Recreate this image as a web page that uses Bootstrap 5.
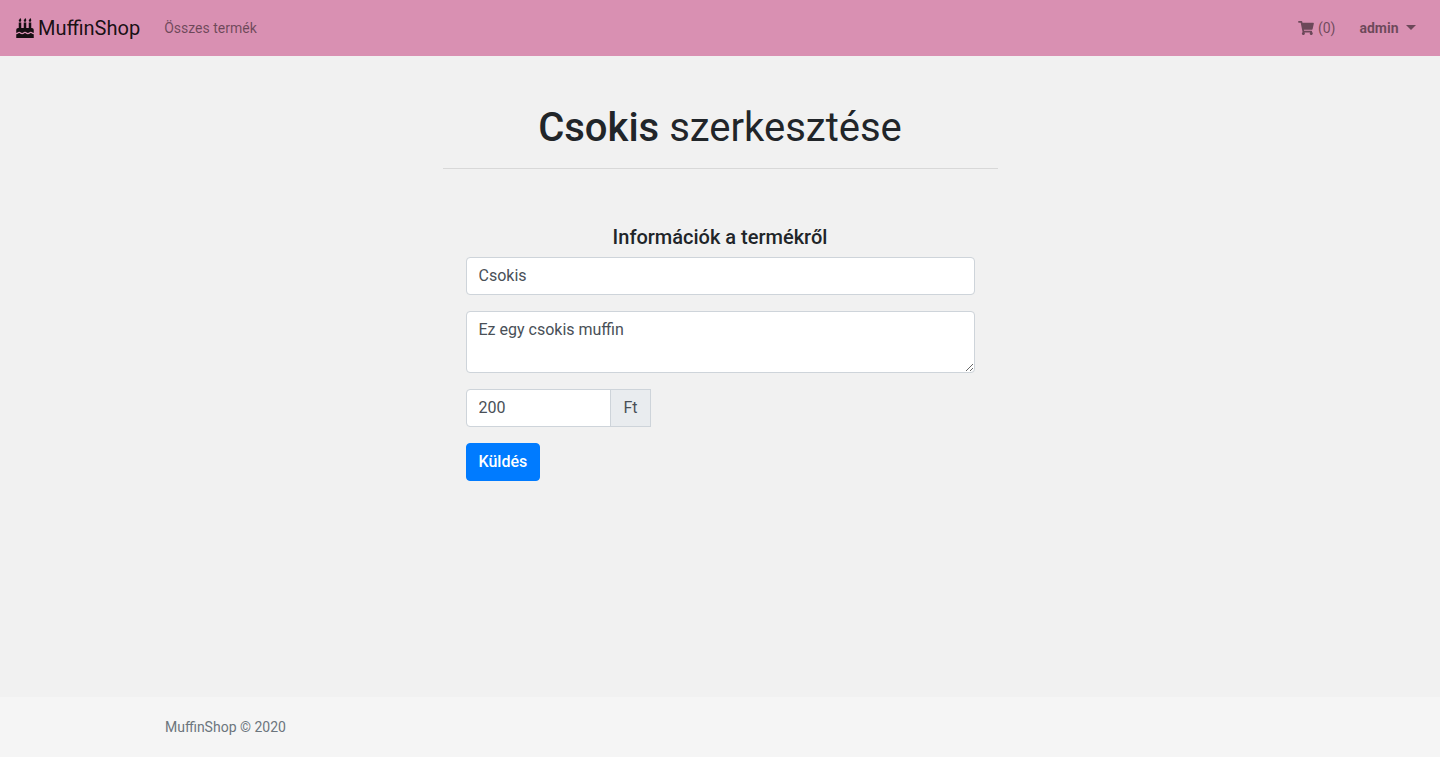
<!DOCTYPE html>
<html lang="hu">
<head>
<meta charset="utf-8">
<meta name="viewport" content="width=device-width, initial-scale=1">
<title>MuffinShop</title>
<link rel="stylesheet" href="https://cdn.jsdelivr.net/npm/bootstrap@5.3.0/dist/css/bootstrap.min.css">
<style>
  body { font-family: Roboto, "Liberation Sans", sans-serif; background: #f1f1f1; color: #212529; }
  .shop-nav { background: #d990b2; min-height: 56px; }
  .shop-nav .navbar-brand { color: rgba(0,0,0,.9); font-size: 20px; line-height: 30px; }
  .shop-nav .nav-link { color: rgba(0,0,0,.5); font-size: 14px; line-height: 24px; font-weight: 400; }
  .shop-nav .nav-link.user-link { font-weight: 700; }
  .user-link.dropdown-toggle::after { margin-left: 4px; border-width: 5px 5px 0; vertical-align: 3px; }
  .cake-icon { width: 18px; height: 20px; }
  .cart-icon { width: 16px; height: 14px; }
  .page-wrap { max-width: 1140px; padding-left: 15px; padding-right: 15px; }
  .page-title { font-size: 40px; line-height: 48px; font-weight: 400; }
  .page-title strong { font-weight: 500; }
  .title-rule { border-color: #000; opacity: .1; }
  .product-form { padding-left: 23px; padding-right: 23px; }
  .product-form h2 { font-size: 20px; line-height: 24px; font-weight: 500; }
  .product-form .form-control { color: #495057; border-color: #ced4da; border-radius: 4px; }
  .product-form textarea.form-control { height: 62px; min-height: 62px; }
  .price-group { max-width: 185px; }
  .product-form .price-group .form-control { border-radius: 4px 0 0 4px; }
  .product-form .price-group .input-group-text { margin-left: 0; color: #495057; background: #e9ecef; border-color: #ced4da; border-radius: 0; }
  .send-btn { --bs-btn-bg: #007bff; --bs-btn-border-color: #007bff; --bs-btn-border-radius: 4px; font-weight: 500; }
  .shop-footer { background: #f5f5f5; font-size: 14px; line-height: 60px; color: #6c757d; }
</style>
</head>
<body class="d-flex flex-column min-vh-100">
<nav class="navbar navbar-expand shop-nav px-3 py-2">
  <a class="navbar-brand d-flex align-items-center gap-1 p-0 me-3" href="#">
    <svg class="cake-icon" viewBox="0 0 448 512" fill="currentColor" aria-hidden="true"><path d="M448 384c-28.02 0-31.26-32-74.5-32-43.43 0-46.825 32-74.75 32-27.695 0-31.454-32-74.75-32-42.842 0-47.218 32-74.5 32-28.148 0-31.202-32-74.75-32-43.547 0-46.653 32-74.75 32v-80c0-26.5 21.5-48 48-48h16V112h64v144h64V112h64v144h64V112h64v144h16c26.5 0 48 21.5 48 48v80zm0 128H0v-96c43.356 0 46.767-32 74.75-32 27.951 0 31.253 32 74.75 32 42.843 0 47.217-32 74.5-32 28.148 0 31.201 32 74.75 32 43.357 0 46.767-32 74.75-32 27.488 0 31.252 32 74.5 32v96zM96 96c-17.75 0-32-14.25-32-32 0-31 32-23 32-64 12 0 32 29.5 32 56s-14.25 40-32 40zm128 0c-17.75 0-32-14.25-32-32 0-31 32-23 32-64 12 0 32 29.5 32 56s-14.25 40-32 40zm128 0c-17.75 0-32-14.25-32-32 0-31 32-23 32-64 12 0 32 29.5 32 56s-14.25 40-32 40z"/></svg>
    <span>MuffinShop</span>
  </a>
  <ul class="navbar-nav flex-grow-1 gap-2">
    <li class="nav-item me-auto"><a class="nav-link px-2" href="#">Összes termék</a></li>
    <li class="nav-item"><a class="nav-link px-2 d-flex align-items-center gap-1" href="#">
      <svg class="cart-icon" viewBox="0 0 576 512" fill="currentColor" aria-hidden="true"><path d="M528.12 301.319l47.273-208C578.806 78.301 567.391 64 551.99 64H159.208l-9.166-44.81C147.758 8.021 137.93 0 126.529 0H24C10.745 0 0 10.745 0 24v16c0 13.255 10.745 24 24 24h69.883l70.248 343.435C147.325 417.1 136 435.222 136 456c0 30.928 25.072 56 56 56s56-25.072 56-56c0-15.674-6.447-29.835-16.824-40h209.647C430.447 426.165 424 440.326 424 456c0 30.928 25.072 56 56 56s56-25.072 56-56c0-22.172-12.888-41.332-31.579-50.405l5.517-24.276c3.413-15.018-8.002-29.319-23.403-29.319H218.117l-6.545-32h293.145c11.206 0 20.92-7.754 23.403-18.681z"/></svg>
      <span>(0)</span></a></li>
    <li class="nav-item dropdown"><a class="nav-link user-link dropdown-toggle px-2" href="#" role="button" data-bs-toggle="dropdown" aria-expanded="false">admin </a></li>
  </ul>
</nav>
<main class="container page-wrap flex-grow-1 pt-5">
  <div class="w-50 mx-auto">
    <h1 class="page-title text-center mb-3"><strong>Csokis</strong> szerkesztése</h1>
    <hr class="title-rule mt-0 mb-3">
    <form class="product-form pt-4 mt-3">
      <h2 class="text-center mt-3 mb-2">Információk a termékről</h2>
      <input type="text" class="form-control mb-3" value="Csokis" aria-label="Termék neve">
      <textarea class="form-control mb-3" rows="2" aria-label="Leírás">Ez egy csokis muffin</textarea>
      <div class="input-group price-group mb-3">
        <input type="text" class="form-control" value="200" id="price" aria-label="Ár">
        <label class="input-group-text" for="price">Ft</label>
      </div>
      <button type="submit" class="btn btn-primary send-btn">Küldés</button>
    </form>
  </div>
</main>
<footer class="shop-footer">
  <div class="container page-wrap">MuffinShop © 2020</div>
</footer>
<script src="https://cdn.jsdelivr.net/npm/bootstrap@5.3.0/dist/js/bootstrap.bundle.min.js"></script>
</body>
</html>
